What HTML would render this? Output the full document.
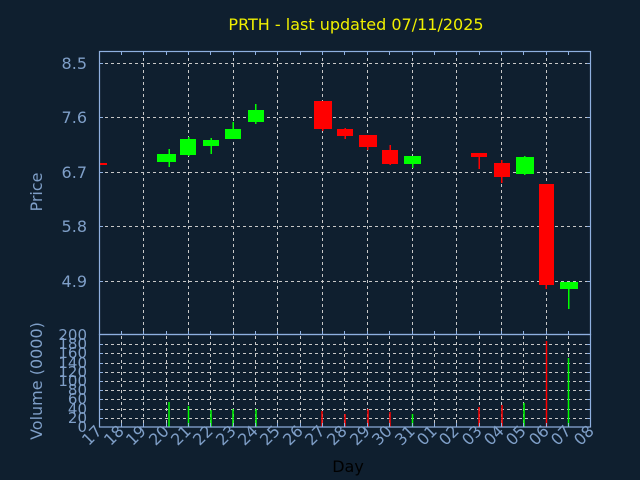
<!DOCTYPE html>
<html><head><meta charset="utf-8"><style>
html,body{margin:0;padding:0;background:#0f1f2f;}
svg{display:block;font-family:"DejaVu Sans","Liberation Sans",sans-serif;}
</style></head><body>
<svg width="640" height="480" xmlns="http://www.w3.org/2000/svg">
<rect width="640" height="480" fill="#0f1f2f"/>
<text x="356" y="30" fill="#f0f000" font-size="16" text-anchor="middle">PRTH - last updated 07/11/2025</text>
<g stroke="#c8c8c8" stroke-width="1" stroke-dasharray="3,3">
<line x1="99" y1="63.5" x2="591" y2="63.5"/>
<line x1="99" y1="117.5" x2="591" y2="117.5"/>
<line x1="99" y1="172.5" x2="591" y2="172.5"/>
<line x1="99" y1="226.5" x2="591" y2="226.5"/>
<line x1="99" y1="281.5" x2="591" y2="281.5"/>
<line x1="143.5" y1="52" x2="143.5" y2="334"/>
<line x1="188.5" y1="52" x2="188.5" y2="334"/>
<line x1="233.5" y1="52" x2="233.5" y2="334"/>
<line x1="277.5" y1="52" x2="277.5" y2="334"/>
<line x1="322.5" y1="52" x2="322.5" y2="334"/>
<line x1="367.5" y1="52" x2="367.5" y2="334"/>
<line x1="412.5" y1="52" x2="412.5" y2="334"/>
<line x1="456.5" y1="52" x2="456.5" y2="334"/>
<line x1="501.5" y1="52" x2="501.5" y2="334"/>
<line x1="546.5" y1="52" x2="546.5" y2="334"/>
<line x1="99" y1="344.5" x2="591" y2="344.5"/>
<line x1="99" y1="353.5" x2="591" y2="353.5"/>
<line x1="99" y1="363.5" x2="591" y2="363.5"/>
<line x1="99" y1="372.5" x2="591" y2="372.5"/>
<line x1="99" y1="381.5" x2="591" y2="381.5"/>
<line x1="99" y1="390.5" x2="591" y2="390.5"/>
<line x1="99" y1="399.5" x2="591" y2="399.5"/>
<line x1="99" y1="409.5" x2="591" y2="409.5"/>
<line x1="99" y1="418.5" x2="591" y2="418.5"/>
<line x1="121.5" y1="336" x2="121.5" y2="427"/>
<line x1="143.5" y1="336" x2="143.5" y2="427"/>
<line x1="166.5" y1="336" x2="166.5" y2="427"/>
<line x1="188.5" y1="336" x2="188.5" y2="427"/>
<line x1="210.5" y1="336" x2="210.5" y2="427"/>
<line x1="233.5" y1="336" x2="233.5" y2="427"/>
<line x1="255.5" y1="336" x2="255.5" y2="427"/>
<line x1="277.5" y1="336" x2="277.5" y2="427"/>
<line x1="300.5" y1="336" x2="300.5" y2="427"/>
<line x1="322.5" y1="336" x2="322.5" y2="427"/>
<line x1="344.5" y1="336" x2="344.5" y2="427"/>
<line x1="367.5" y1="336" x2="367.5" y2="427"/>
<line x1="389.5" y1="336" x2="389.5" y2="427"/>
<line x1="412.5" y1="336" x2="412.5" y2="427"/>
<line x1="434.5" y1="336" x2="434.5" y2="427"/>
<line x1="456.5" y1="336" x2="456.5" y2="427"/>
<line x1="479.5" y1="336" x2="479.5" y2="427"/>
<line x1="501.5" y1="336" x2="501.5" y2="427"/>
<line x1="523.5" y1="336" x2="523.5" y2="427"/>
<line x1="546.5" y1="336" x2="546.5" y2="427"/>
<line x1="568.5" y1="336" x2="568.5" y2="427"/>
</g>
<g fill="#00ff00">
<rect x="168.5" y="149" width="1.5" height="18"/><rect x="157" y="154" width="19" height="8"/>
<rect x="188" y="137" width="1.5" height="19"/><rect x="180" y="139" width="16" height="16"/>
<rect x="210.5" y="138" width="1.5" height="16"/><rect x="203" y="140" width="16" height="6"/>
<rect x="232.5" y="122" width="1.5" height="10"/><rect x="225" y="129" width="16" height="10"/>
<rect x="255" y="104" width="1.5" height="20"/><rect x="248" y="110" width="16" height="12"/>
<rect x="412" y="160" width="1.5" height="8"/><rect x="404" y="156" width="17" height="8"/>
<rect x="524" y="156" width="1.5" height="19"/><rect x="516" y="157" width="18" height="17"/>
<rect x="568" y="285" width="1.5" height="24"/><rect x="560" y="282" width="18" height="7"/>
</g>
<g fill="#ff0000">
<rect x="99" y="163" width="8" height="2"/>
<rect x="322" y="125" width="1.5" height="6"/><rect x="314" y="101" width="18" height="28"/>
<rect x="344.5" y="128" width="1.5" height="11"/><rect x="337" y="129" width="16" height="7"/>
<rect x="367" y="135" width="1.5" height="15"/><rect x="359" y="135" width="18" height="12"/>
<rect x="389.5" y="145" width="1.5" height="20"/><rect x="382" y="150" width="16" height="14"/>
<rect x="478.5" y="153" width="1.5" height="16"/><rect x="471" y="153" width="16" height="4"/>
<rect x="501" y="160" width="1.5" height="23"/><rect x="494" y="163" width="16" height="14"/>
<rect x="545.5" y="184" width="1.5" height="105"/><rect x="539" y="184" width="15" height="101"/>
</g>
<g stroke-width="1.5">
<line x1="169" y1="402" x2="169" y2="427" stroke="#00ff00"/>
<line x1="188.5" y1="406" x2="188.5" y2="427" stroke="#00ff00"/>
<line x1="211" y1="410" x2="211" y2="427" stroke="#00ff00"/>
<line x1="233" y1="409" x2="233" y2="427" stroke="#00ff00"/>
<line x1="256" y1="409" x2="256" y2="427" stroke="#00ff00"/>
<line x1="322" y1="411" x2="322" y2="427" stroke="#ff0000"/>
<line x1="345" y1="414" x2="345" y2="427" stroke="#ff0000"/>
<line x1="368" y1="409" x2="368" y2="427" stroke="#ff0000"/>
<line x1="390" y1="412" x2="390" y2="427" stroke="#ff0000"/>
<line x1="412.5" y1="414" x2="412.5" y2="427" stroke="#00ff00"/>
<line x1="479" y1="407" x2="479" y2="427" stroke="#ff0000"/>
<line x1="502" y1="405" x2="502" y2="427" stroke="#ff0000"/>
<line x1="524" y1="403" x2="524" y2="427" stroke="#00ff00"/>
<line x1="546.5" y1="341" x2="546.5" y2="427" stroke="#ff0000"/>
<line x1="568.5" y1="358" x2="568.5" y2="427" stroke="#00ff00"/>
</g>
<g fill="none" stroke="#8fb0e0" stroke-width="1.2">
<rect x="99.5" y="51.5" width="491" height="283"/>
<rect x="99.5" y="334.5" width="491" height="92.5"/>
</g>
<g stroke="#8fb0e0" stroke-width="1">
<path d="M99 63.5h4M99 117.5h4M99 172.5h4M99 226.5h4M99 281.5h4M587 63.5h4M587 117.5h4M587 172.5h4M587 226.5h4M587 281.5h4"/>
<path d="M99 344.5h4M99 353.5h4M99 363.5h4M99 372.5h4M99 381.5h4M99 390.5h4M99 399.5h4M99 409.5h4M99 418.5h4M587 344.5h4M587 353.5h4M587 363.5h4M587 372.5h4M587 381.5h4M587 390.5h4M587 399.5h4M587 409.5h4M587 418.5h4"/>
<path d="M121.5 52v3M143.5 52v3M166.5 52v3M188.5 52v3M210.5 52v3M233.5 52v3M255.5 52v3M277.5 52v3M300.5 52v3M322.5 52v3M344.5 52v3M367.5 52v3M389.5 52v3M412.5 52v3M434.5 52v3M456.5 52v3M479.5 52v3M501.5 52v3M523.5 52v3M546.5 52v3M568.5 52v3"/>
<path d="M121.5 334v-3M143.5 334v-3M166.5 334v-3M188.5 334v-3M210.5 334v-3M233.5 334v-3M255.5 334v-3M277.5 334v-3M300.5 334v-3M322.5 334v-3M344.5 334v-3M367.5 334v-3M389.5 334v-3M412.5 334v-3M434.5 334v-3M456.5 334v-3M479.5 334v-3M501.5 334v-3M523.5 334v-3M546.5 334v-3M568.5 334v-3"/>
<path d="M121.5 427v-4M143.5 427v-4M166.5 427v-4M188.5 427v-4M210.5 427v-4M233.5 427v-4M255.5 427v-4M277.5 427v-4M300.5 427v-4M322.5 427v-4M344.5 427v-4M367.5 427v-4M389.5 427v-4M412.5 427v-4M434.5 427v-4M456.5 427v-4M479.5 427v-4M501.5 427v-4M523.5 427v-4M546.5 427v-4M568.5 427v-4"/>
</g>
<g fill="#7f9fc8" font-size="16" text-anchor="end">
<text x="87" y="69">8.5</text>
<text x="87" y="123">7.6</text>
<text x="87" y="178">6.7</text>
<text x="87" y="232">5.8</text>
<text x="87" y="287">4.9</text>
</g>
<g fill="#7f9fc8" font-size="15" text-anchor="end">
<text x="87" y="340">200</text><text x="87" y="349">180</text><text x="87" y="358">160</text>
<text x="87" y="368">140</text><text x="87" y="377">120</text><text x="87" y="386">100</text>
<text x="87" y="395">80</text><text x="87" y="404">60</text><text x="87" y="414">40</text>
<text x="87" y="423">20</text><text x="87" y="432">0</text>
</g>
<text transform="translate(42,192) rotate(-90)" fill="#7f9fc8" font-size="16" text-anchor="middle">Price</text>
<text transform="translate(42,381) rotate(-90)" fill="#7f9fc8" font-size="16" text-anchor="middle">Volume (0000)</text>
<g fill="#7f9fc8" font-size="16" text-anchor="end">
<text transform="translate(103,432) rotate(-45)">17</text>
<text transform="translate(125,432) rotate(-45)">18</text>
<text transform="translate(147,432) rotate(-45)">19</text>
<text transform="translate(170,432) rotate(-45)">20</text>
<text transform="translate(192,432) rotate(-45)">21</text>
<text transform="translate(214,432) rotate(-45)">22</text>
<text transform="translate(237,432) rotate(-45)">23</text>
<text transform="translate(259,432) rotate(-45)">24</text>
<text transform="translate(281,432) rotate(-45)">25</text>
<text transform="translate(304,432) rotate(-45)">26</text>
<text transform="translate(326,432) rotate(-45)">27</text>
<text transform="translate(348,432) rotate(-45)">28</text>
<text transform="translate(371,432) rotate(-45)">29</text>
<text transform="translate(393,432) rotate(-45)">30</text>
<text transform="translate(416,432) rotate(-45)">31</text>
<text transform="translate(438,432) rotate(-45)">01</text>
<text transform="translate(460,432) rotate(-45)">02</text>
<text transform="translate(483,432) rotate(-45)">03</text>
<text transform="translate(505,432) rotate(-45)">04</text>
<text transform="translate(527,432) rotate(-45)">05</text>
<text transform="translate(550,432) rotate(-45)">06</text>
<text transform="translate(572,432) rotate(-45)">07</text>
<text transform="translate(595,432) rotate(-45)">08</text>
</g>
<text x="348" y="472" fill="#000" font-size="16" text-anchor="middle">Day</text>
</svg>
</body></html>
